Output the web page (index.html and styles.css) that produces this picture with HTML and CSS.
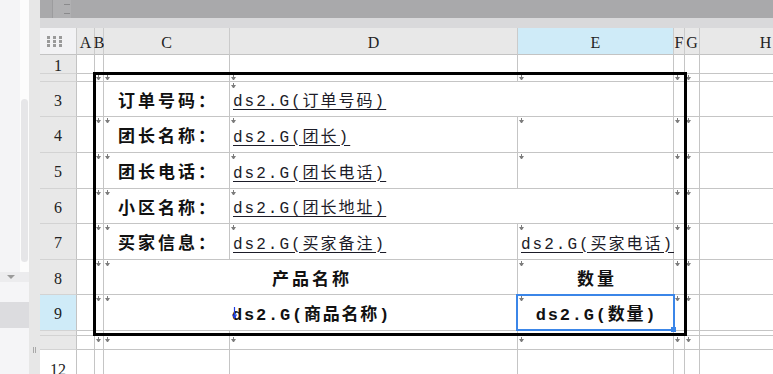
FILE: index.html
```html
<!DOCTYPE html>
<html lang="zh-CN">
<head>
<meta charset="utf-8">
<title>报表设计</title>
<link rel="stylesheet" href="styles.css">
</head>
<body>
<aside class="side">
  <div class="side-main">
    <div class="side-top">
      <div class="side-pane"></div>
      <div class="side-track"><div class="side-thumb"></div></div>
    </div>
    <div class="side-drop"><span class="tri"></span></div>
    <div class="side-item"></div>
    <div class="side-item active"></div>
    <div class="side-rest"></div>
  </div>
  <div class="splitter"><span class="grip"></span><span class="grip"></span></div>
</aside>
<main class="main">
  <div class="topbar"><div class="ruler"><span class="tick"></span><span class="tick"></span></div></div>
  <div class="band"></div>
  <div class="sheet">
    <!-- header row -->
    <div class="corner"><i></i><i></i><i></i><i></i><i></i><i></i><i></i><i></i><i></i></div>
    <div class="c ch">A</div>
    <div class="c ch">B</div>
    <div class="c ch">C</div>
    <div class="c ch">D</div>
    <div class="c ch sel">E</div>
    <div class="c ch">F</div>
    <div class="c ch">G</div>
    <div class="c ch">H</div>
    <!-- row 1 -->
    <div class="c rh">1</div>
    <div class="c"></div><div class="c"></div><div class="c"></div><div class="c"></div><div class="c"></div><div class="c"></div><div class="c"></div><div class="c"></div>
    <!-- row 2 -->
    <div class="c rh"></div>
    <div class="c"></div><div class="c mk"></div><div class="c mk"></div><div class="c mk"></div><div class="c mk"></div><div class="c mk"></div><div class="c mk"></div><div class="c"></div>
    <!-- row 3 -->
    <div class="c rh">3</div>
    <div class="c"></div><div class="c"></div>
    <div class="c"><span class="lbl">订单号码：</span></div>
    <div class="c mk span2"><span class="f">ds2.G(订单号码)</span></div>
    <div class="c"></div><div class="c"></div><div class="c"></div>
    <!-- row 4 -->
    <div class="c rh">4</div>
    <div class="c"></div><div class="c mk"></div>
    <div class="c mk"><span class="lbl">团长名称：</span></div>
    <div class="c mk"><span class="f">ds2.G(团长)</span></div>
    <div class="c mk"></div><div class="c mk"></div><div class="c mk"></div><div class="c"></div>
    <!-- row 5 -->
    <div class="c rh">5</div>
    <div class="c"></div><div class="c mk"></div>
    <div class="c mk"><span class="lbl">团长电话：</span></div>
    <div class="c mk"><span class="f">ds2.G(团长电话)</span></div>
    <div class="c mk"></div><div class="c mk"></div><div class="c mk"></div><div class="c"></div>
    <!-- row 6 -->
    <div class="c rh">6</div>
    <div class="c"></div><div class="c mk"></div>
    <div class="c mk"><span class="lbl">小区名称：</span></div>
    <div class="c mk span2"><span class="f">ds2.G(团长地址)</span></div>
    <div class="c mk"></div><div class="c mk"></div><div class="c"></div>
    <!-- row 7 -->
    <div class="c rh">7</div>
    <div class="c"></div><div class="c mk"></div>
    <div class="c mk"><span class="lbl">买家信息：</span></div>
    <div class="c mk"><span class="f">ds2.G(买家备注)</span></div>
    <div class="c mk"><span class="f">ds2.G(买家电话)</span></div>
    <div class="c mk"></div><div class="c mk"></div><div class="c"></div>
    <!-- row 8 -->
    <div class="c rh">8</div>
    <div class="c"></div><div class="c mk"></div>
    <div class="c mk span2"><span class="lbl">产品名称</span></div>
    <div class="c mk"><span class="lbl">数量</span></div>
    <div class="c mk"></div><div class="c mk"></div><div class="c"></div>
    <!-- row 9 -->
    <div class="c rh sel">9</div>
    <div class="c"></div><div class="c mk"></div>
    <div class="c mk span2"><span class="fb">ds2.G(商品名称)</span><svg class="caret" width="5" height="12" viewBox="0 0 5 12"><path d="M2.5 0V11M0.5 7.5L2.5 11L4.5 7.5" fill="none" stroke="#1f3ee0" stroke-width="1.2"/></svg></div>
    <div class="c mk"><span class="fb">ds2.G(数量)</span></div>
    <div class="c mk"></div><div class="c mk"></div><div class="c"></div>
    <!-- row 10 -->
    <div class="c rh"></div>
    <div class="c"></div><div class="c"></div><div class="c"></div><div class="c"></div><div class="c"></div><div class="c"></div><div class="c"></div><div class="c"></div>
    <!-- row 11 -->
    <div class="c rh"></div>
    <div class="c"></div><div class="c mk"></div><div class="c mk"></div><div class="c mk"></div><div class="c mk"></div><div class="c mk"></div><div class="c mk"></div><div class="c"></div>
    <!-- row 12 -->
    <div class="c rh blank">12</div>
    <div class="c"></div><div class="c"></div><div class="c"></div><div class="c"></div><div class="c"></div><div class="c"></div><div class="c"></div><div class="c"></div>

    <div class="frame"></div>
    <div class="selbox"><span class="handle"></span></div>
  </div>
</main>
</body>
</html>
```
FILE: styles.css
```css
* { box-sizing: border-box; }
html, body { margin: 0; padding: 0; }
body {
  width: 773px;
  height: 374px;
  overflow: hidden;
  display: flex;
  background: #fff;
  font-family: "Liberation Sans", "Noto Sans CJK SC", sans-serif;
}

/* left side pane */
.side { width: 40px; flex: none; display: flex; height: 374px; }
.side-main { width: 29px; display: flex; flex-direction: column; }
.side-top { height: 272px; display: flex; flex: none; }
.side-pane { width: 20px; background: #f4f4f6; }
.side-track { width: 9px; background: #fcfcfc; padding-top: 99px; padding-left: 1px; }
.side-thumb { width: 7px; height: 163px; background: #e6e6e8; border-radius: 4px; }
.side-drop { height: 10px; flex: none; background: #ececee; display: flex; padding: 3px 0 0 7px; }
.tri { width: 0; height: 0; border-left: 4px solid transparent; border-right: 4px solid transparent; border-top: 4px solid #9b9b9b; }
.side-item { height: 20px; flex: none; background: #f5f5f7; }
.side-item.active { height: 26px; background: #dcdcdf; }
.side-rest { flex: 1; background: #f5f5f7; }
.splitter { width: 11px; flex: none; background: #e7e7e7; display: flex; align-items: flex-end; justify-content: center; gap: 1px; padding-bottom: 21px; }
.grip { width: 1px; height: 6px; background: #a9a9a9; }

/* main */
.main { flex: 1; min-width: 0; overflow: hidden; display: flex; flex-direction: column; }
.topbar { height: 18px; flex: none; background: #a9a9ab; padding-left: 12px; }
.ruler { width: 19px; height: 18px; background: #b0b0b2; border-left: 1px solid #9c9c9e; display: flex; flex-direction: column; gap: 8px; padding: 4px 0 0 11px; }
.tick { width: 6px; height: 1px; background: #8a8a8c; }
.band { height: 10px; flex: none; background: #d9d9db; }

.sheet {
  position: relative;
  flex: none;
  display: grid;
  grid-template-columns: 37px 18px 9px 126px 288px 156px 11px 15px 132px;
  grid-template-rows: 27px 19px 8px 35px 36px 36px 35px 36px 35px 36px 5px 14px 35px;
}

.corner {
  background: #f2f2f4;
  border-right: 1px solid #cbcbcb;
  border-bottom: 1px solid #c3c3c3;
  padding: 8px 0 0 7px;
  display: grid;
  grid-template-columns: repeat(3, 3px);
  grid-auto-rows: 3px;
  column-gap: 3px;
  row-gap: 1px;
  align-content: start;
}
.corner i { background: #9a9a9a; }

.c {
  position: relative;
  background: #fff;
  border-right: 1px solid #c5c5c5;
  border-bottom: 1px solid #c5c5c5;
  display: flex;
  align-items: center;
  min-width: 0;
  white-space: nowrap;
}
.span2 { grid-column: span 2; }

.ch {
  background: #e8e8e8;
  border-right-color: #cbcbcb;
  border-bottom-color: #c3c3c3;
  justify-content: center;
  padding-top: 3px;
  font-family: "Liberation Serif", serif;
  font-size: 16px;
  color: #222;
}
.rh {
  background: #e8e8e8;
  border-right-color: #c3c3c3;
  border-bottom-color: #d3d3d3;
  justify-content: center;
  padding-top: 3px;
  font-family: "Liberation Serif", serif;
  font-size: 16px;
  color: #222;
  overflow: hidden;
}
.sel { background: #cfebf8; }
.rh.blank { background: #fff; padding-top: 5px; }

/* little down-arrow markers in cell corners */
.mk::before {
  content: "";
  position: absolute;
  left: 3px;
  top: 1px;
  width: 1px;
  height: 4px;
  background: #7c7c7c;
}
.mk::after {
  content: "";
  position: absolute;
  left: 1px;
  top: 3px;
  width: 1px;
  height: 0;
  border-left: 2px solid transparent;
  border-right: 2px solid transparent;
  border-top: 3px solid #7c7c7c;
}

.lbl {
  width: 100%;
  text-align: center;
  font-family: "Noto Sans CJK SC", sans-serif;
  font-weight: 700;
  font-size: 17px;
  letter-spacing: 3px;
  color: #111;
  padding-left: 3px;
}
.f {
  padding-left: 3px;
  font-family: "Liberation Mono", "Noto Sans CJK SC", monospace;
  font-size: 16px;
  letter-spacing: 2px;
  color: #1c1c28;
  text-decoration: underline;
  text-decoration-thickness: 1px;
  text-underline-offset: 3px;
}
.fb {
  width: 100%;
  text-align: center;
  padding-left: 2px;
  font-family: "Liberation Mono", "Noto Sans CJK SC", monospace;
  font-weight: 700;
  font-size: 17px;
  letter-spacing: 1.8px;
  color: #111;
}
.caret { position: absolute; left: 128px; top: 12px; }

/* overlays */
.frame {
  position: absolute;
  left: 53px;
  top: 44px;
  width: 594px;
  height: 264px;
  border: 3px solid #000;
}
.selbox {
  position: absolute;
  left: 476px;
  top: 266px;
  width: 159px;
  height: 37px;
  border: 2px solid #3b86e8;
}
.handle {
  position: absolute;
  right: -3px;
  bottom: -3px;
  width: 5px;
  height: 5px;
  background: #3b86e8;
}
```
